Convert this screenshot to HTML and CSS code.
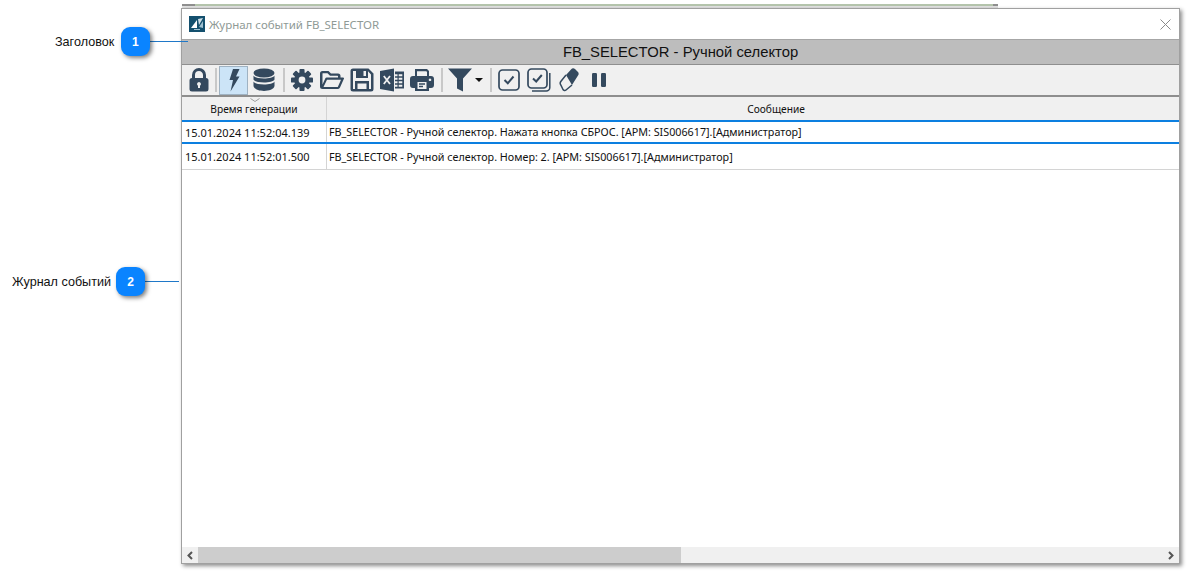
FILE: index.html
```html
<!DOCTYPE html>
<html lang="ru">
<head>
<meta charset="utf-8">
<title>Журнал событий FB_SELECTOR</title>
<link rel="stylesheet" href="styles.css">
</head>
<body>
<div class="page">
  <div class="behind"></div>
  <div class="window">
    <div class="titlebar">
      <svg class="logo" viewBox="0 0 16 16"><rect width="16" height="16" fill="#14506e"/><path d="M2 12 L8 4 V12Z" fill="#fff"/><path d="M9 3 L14 2 L10 9Z" fill="#cfe0e8"/><path d="M10 11 L14 5 V12Z" fill="#9fc0d0"/><rect x="5" y="13" width="6" height="1" fill="#9fc0d0"/></svg>
      <span class="wintitle">Журнал событий FB_SELECTOR</span>
      <svg class="close" viewBox="0 0 11 11"><path d="M0.5 0.5 L10.5 10.5 M10.5 0.5 L0.5 10.5" stroke="#8a8a8a" stroke-width="1" fill="none"/></svg>
    </div>
    <div class="banner">FB_SELECTOR - Ручной селектор</div>
    <div class="toolbar">
      <svg class="ic w20" viewBox="0 0 20 24"><path d="M4.5 11 V7 a5.5 5.5 0 0 1 11 0 V11" fill="none" stroke="#34495e" stroke-width="3"/><path d="M3 10 H17 a2.5 2.5 0 0 1 2.5 2.5 V21 a2.5 2.5 0 0 1 -2.5 2.5 H3 a2.5 2.5 0 0 1 -2.5 -2.5 V12.500 a2.500 2.500 0 0 1 2.500 -2.500Z M10 14 a2 2 0 0 0 -1 3.700 V20 H11 V17.700 a2 2 0 0 0 -1 -3.700Z" fill="#34495e" fill-rule="evenodd"/></svg>
      <span class="sep sep-a"></span>
      <span class="active"><svg class="bolt" viewBox="0 0 12 24"><path d="M5 1 H11.500 L8 8.500 H11.500 L2.500 23.500 L5 12 H1.500Z" fill="#34495e"/></svg></span>
      <svg class="ic w22" viewBox="0 0 22 24"><ellipse cx="11" cy="5" rx="10.500" ry="4.500" fill="#34495e"/><path d="M0.500 7.500 C2 11.500 20 11.500 21.500 7.500 V11.500 C20 15.500 2 15.500 0.500 11.500Z M0.500 13.500 C2 17.500 20 17.500 21.500 13.500 V18 C20 24.500 2 24.500 0.500 18Z" fill="#34495e"/></svg>
      <span class="sep sep-b"></span>
      <svg class="ic w22 gear" viewBox="0 0 24 24"><g fill="#34495e"><rect x="9.200" y="0" width="5.600" height="24" rx="1"/><rect x="9.200" y="0" width="5.600" height="24" rx="1" transform="rotate(45 12 12)"/><rect x="9.200" y="0" width="5.600" height="24" rx="1" transform="rotate(90 12 12)"/><rect x="9.200" y="0" width="5.600" height="24" rx="1" transform="rotate(135 12 12)"/><circle cx="12" cy="12" r="8.500"/></g><circle cx="12" cy="12" r="3.700" fill="#f0f0f0"/></svg>
      <svg class="ic w24 folder" viewBox="0 0 24 20"><path fill="#34495e" fill-rule="evenodd" d="M2.500 1 H8.500 L11 3.500 H18 a2.500 2.500 0 0 1 2.500 2.500 V7.500 H23 a1 1 0 0 1 0.800 1.500 L20 17.500 a2.500 2.500 0 0 1 -2 1.500 H2.500 A2.500 2.500 0 0 1 0 16.500 V3.500 A2.500 2.500 0 0 1 2.500 1Z M2.500 14.500 L5.500 8 a1.500 1.500 0 0 1 1.200 -0.500 H18 V6.200 a0.500 0.500 0 0 0 -0.500 -0.500 H10 L7.500 3.200 H2.800 a0.500 0.500 0 0 0 -0.300 0.300Z M3.500 17 H17.800 L21 9.700 H7 Z"/></svg>
      <svg class="ic w24" viewBox="0 0 24 24"><path fill="#34495e" fill-rule="evenodd" d="M3 0.500 H18.500 L23.500 5.500 V21 a2.500 2.500 0 0 1 -2.500 2.500 H3 A2.500 2.500 0 0 1 0.500 21 V3 A2.500 2.500 0 0 1 3 0.500Z M3 3 V21 H21 V6.500 L18 3.300 V10 H6 V3Z M13.500 3 V8 H16 V3Z M5 13 H19 V21 H5Z M7.500 15.500 V21 H16.500 V15.500Z"/></svg>
      <svg class="ic w24" viewBox="0 0 24 24"><path fill="#34495e" d="M0 3 L14 0.500 V23.500 L0 21Z"/><path d="M3.800 8 L10 16 M10 8 L3.800 16" stroke="#f0f0f0" stroke-width="1.800" fill="none"/><path fill="#34495e" d="M15 3.500 H24 V20.500 H15 V18.800 H17.500 V16.800 H15 V15.300 H17.500 V13.300 H15 V11.800 H17.500 V9.800 H15 V8.300 H17.500 V6.300 H15Z M18.700 6.300 V8.300 H22.300 V6.300Z M18.700 9.800 V11.800 H22.300 V9.800Z M18.700 13.300 V15.300 H22.300 V13.300Z M18.700 16.800 V18.800 H22.300 V16.800Z" fill-rule="evenodd"/></svg>
      <svg class="ic w24" viewBox="0 0 24 24"><path fill="#34495e" fill-rule="evenodd" d="M5 1 H17 L19 3 V8 H21 a3 3 0 0 1 3 3 V17 a3 3 0 0 1 -3 3 H19 V23 H5 V20 H3 a3 3 0 0 1 -3 -3 V11 a3 3 0 0 1 3 -3 H5Z M7 3.300 V8 H17 V4 L16.300 3.300Z M7.500 14 V21 H16.500 V14Z M20 10.500 a1.300 1.300 0 1 0 0.010 0Z"/><path d="M9 16 H15 M9 18.500 H13" stroke="#34495e" stroke-width="1.300"/></svg>
      <span class="sep sep-c"></span>
      <svg class="ic w24" viewBox="0 0 24 24"><path fill="#34495e" d="M0 0.500 H24 L15 10.500 V23.500 L9 20.500 V10.500Z"/></svg>
      <svg class="caret" viewBox="0 0 8 4"><path d="M0 0 H8 L4 4Z" fill="#111"/></svg>
      <span class="sep sep-d"></span>
      <svg class="ic w22 check" viewBox="0 0 22 22"><rect x="1" y="1" width="20" height="20" rx="3.500" fill="none" stroke="#34495e" stroke-width="1.700"/><path d="M6.500 11 L9.800 14.300 L15.500 7.500" fill="none" stroke="#34495e" stroke-width="2"/></svg>
      <svg class="ic w24 check2" viewBox="0 0 24 24"><rect x="1" y="1" width="19" height="19" rx="3.500" fill="none" stroke="#34495e" stroke-width="1.700"/><path d="M6 10.500 L9.200 13.500 L14.800 7" fill="none" stroke="#34495e" stroke-width="2"/><path d="M22.800 5 V19.500 a3.500 3.500 0 0 1 -3.500 3.500 H5" fill="none" stroke="#34495e" stroke-width="1.500"/></svg>
      <svg class="ic w20 eraser" viewBox="0 0 20 24"><path fill="#34495e" d="M7 7 L12 1.500 a3 3 0 0 1 4 -0.500 L18.500 3.500 a3 3 0 0 1 0.500 4 L13 17Z"/><path d="M7 7 L1.800 13.500 a3 3 0 0 0 0 3.500 L4 21.500 a2 2 0 0 0 3 0.500 L13 17" fill="none" stroke="#34495e" stroke-width="1.500"/></svg>
      <svg class="ic pause" viewBox="0 0 14 14"><rect x="0" y="0" width="5" height="14" rx="1.200" fill="#34495e"/><rect x="9" y="0" width="5" height="14" rx="1.200" fill="#34495e"/></svg>
    </div>
    <div class="table">
      <div class="thead">
        <div class="cell c-time th">
          <svg class="sort" viewBox="0 0 10 4"><path d="M0.500 0.500 L5 3.500 L9.500 0.500" fill="none" stroke="#a0a0a0"/></svg>
          Время генерации
        </div>
        <div class="cell c-msg th th-msg">Сообщение</div>
      </div>
      <div class="row selected">
        <div class="cell c-time">15.01.2024 11:52:04.139</div>
        <div class="cell c-msg">FB_SELECTOR - Ручной селектор. Нажата кнопка СБРОС. [АРМ: SIS006617].[Администратор]</div>
      </div>
      <div class="row plain">
        <div class="cell c-time">15.01.2024 11:52:01.500</div>
        <div class="cell c-msg">FB_SELECTOR - Ручной селектор. Номер: 2. [АРМ: SIS006617].[Администратор]</div>
      </div>
    </div>
    <div class="hscroll">
      <svg class="arrow" viewBox="0 0 7 9"><path d="M5.500 1 L2 4.500 L5.500 8" fill="none" stroke="#555" stroke-width="2"/></svg>
      <div class="track"><div class="thumb"></div></div>
      <svg class="arrow" viewBox="0 0 7 9"><path d="M1.500 1 L5 4.500 L1.500 8" fill="none" stroke="#555" stroke-width="2"/></svg>
    </div>
  </div>
  <div class="callout callout-1"><span class="label">Заголовок</span><span class="badge">1</span><span class="line"></span></div>
  <div class="callout callout-2"><span class="label">Журнал событий</span><span class="badge">2</span><span class="line"></span></div>
</div>
</body>
</html>
```
FILE: styles.css
```css
html, body { margin: 0; padding: 0; background: #fff; }
.page { position: relative; width: 1192px; height: 572px; overflow: hidden; padding-top: 9px; box-sizing: border-box; }
.behind { position: absolute; left: 182px; top: 4px; width: 816px; height: 5px; background: linear-gradient(90deg, #8f8f8f 0 13px, #b4c4ac 13px 811px, #8f8f8f 811px) top / 100% 2px no-repeat, linear-gradient(#e8e8e8, #dcdcdc); }
.window { position: relative; margin-left: 182px; width: 997px; height: 554px; background: #fff; display: flex; flex-direction: column; box-shadow: 0 0 0 1px #a0a0a0, 2px 2px 4px 1px rgba(0,0,0,.45); font-family: "Noto Sans", sans-serif; }
.titlebar { height: 30px; display: flex; align-items: center; padding: 0 7px; border-bottom: 1px solid #a6a6a6; box-sizing: content-box; flex: none; }
.logo { width: 16px; height: 16px; flex: none; }
.wintitle { margin-left: 4px; font-size: 11.5px; color: #8f9a96; flex: 1; }
.close { width: 11px; height: 11px; flex: none; margin-right: 1px; }
.banner { height: 24px; flex: none; background: #bdbdbd; border-bottom: 1px solid #8f8f8f; text-align: center; font: 14.8px/24px "Liberation Sans", sans-serif; color: #111; }
.toolbar { height: 30px; flex: none; background: #f0f0f0; border-bottom: 2px solid #8e8e8e; display: flex; align-items: center; padding-left: 7px; }
.ic { flex: none; height: 24px; margin-right: 6px; }
.w20 { width: 20px; }
.w22 { width: 22px; }
.w24 { width: 24px; }
.sep { width: 2px; height: 24px; background: #c8c8c8; flex: none; }
.sep-a { margin-right: 2px; }
.sep-b { margin-left: 2px; margin-right: 6px; }
.sep-c { margin-left: 1px; margin-right: 5px; }
.sep-d { margin-left: 7px; margin-right: 6px; }
.active { width: 29px; height: 29px; box-sizing: border-box; background: #cce4f7; border: 1px solid #9fb2c2; flex: none; display: flex; align-items: center; justify-content: center; margin-right: 5px; }
.bolt { width: 12px; height: 24px; }
.gear { margin-right: 7px; }
.folder { height: 20px; }
.caret { width: 8px; height: 4px; flex: none; margin-left: -3px; }
.check { margin-right: 7px; }
.check2 { margin-right: 8px; }
.eraser { margin-right: 13px; }
.pause { width: 14px; height: 14px; }
.table { flex: 1; min-height: 0; font-size: 10.75px; color: #111; }
.thead { display: flex; height: 23px; background: #f0f0f0; }
.row { display: flex; box-sizing: border-box; }
.selected { height: 24px; border-top: 2px solid #0c7fe0; border-bottom: 2px solid #0c7fe0; }
.plain { height: 26px; border-bottom: 1px solid #d4d4d4; }
.cell { display: flex; align-items: center; box-sizing: border-box; padding-left: 3px; white-space: nowrap; }
.c-time { width: 145px; flex: none; border-right: 1px solid #d4d4d4; font-size: 11px; }
.c-msg { flex: 1; padding-left: 2px; }
.th { position: relative; justify-content: center; padding: 0; font-size: 10.2px; }
.th-msg { padding-left: 46px; }
.sort { position: absolute; left: 68px; top: 1px; width: 10px; height: 4px; }
.hscroll { height: 16px; flex: none; display: flex; align-items: center; background: #f0f0f0; }
.arrow { width: 16px; height: 9px; flex: none; }
.track { flex: 1; height: 16px; }
.thumb { width: 483px; height: 16px; background: #cdcdcd; }
.callout { position: absolute; display: flex; align-items: center; font: 12.6px "Liberation Sans", sans-serif; color: #111; }
.callout-1 { left: 55px; top: 27px; height: 29px; }
.callout-2 { left: 12px; top: 267px; height: 29px; }
.label { margin-right: 5px; }
.callout-1 .label { margin-right: 6.5px; }
.badge { width: 29px; height: 29px; border-radius: 9px; background: #0a84ff; color: #fff; font-weight: bold; font-size: 12px; display: flex; align-items: center; justify-content: center; box-shadow: 2px 2px 4px rgba(0,0,0,.5); position: relative; z-index: 1; }
.line { height: 1px; background: #1f78c8; display: block; }
.callout-1 .line { width: 38px; }
.callout-2 .line { width: 34px; }
```
